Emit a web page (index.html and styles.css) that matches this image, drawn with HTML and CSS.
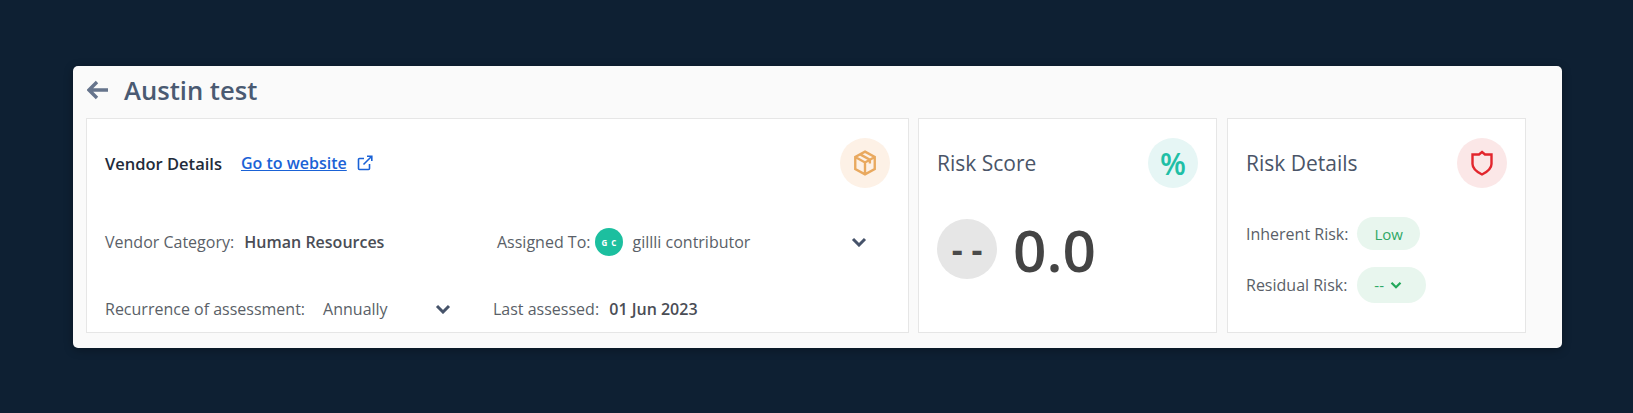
FILE: index.html
```html
<!DOCTYPE html>
<html>
<head>
	<title>Austin test</title>
	<link rel="stylesheet" href="styles.css">
</head>
<body>
	<div class="panel">
		<div class="titleRow">
			<svg class="backArrow" viewBox="0 0 22 20"><path d="M10 2 L2 10 L10 18 M2.5 10 H21"/></svg>
			<h1>Austin test</h1>
		</div>
		<div class="cards">
			<div class="card vendorCard">
				<div class="cardHead">
					<div class="vendorTitle">
						<strong>Vendor Details</strong>
						<a href="#">Go to website</a>
						<svg class="extIcon" viewBox="0 0 16 16"><path d="M12.5 9 V13.5 A1 1 0 0 1 11.5 14.5 H2.5 A1 1 0 0 1 1.5 13.5 V4.5 A1 1 0 0 1 2.5 3.5 H7 M6.5 9.5 L14.5 1.5 M10 1.2 H14.8 V6"/></svg>
					</div>
					<div class="iconCircle orange">
						<svg viewBox="0 0 24 24"><path d="M12 1.5 L21 6.5 V17.5 L12 22.5 L3 17.5 V6.5 Z M3 6.5 L12 11.5 L21 6.5 M12 11.5 V22.5 M7.5 4 L16.5 9 V12.5"/></svg>
					</div>
				</div>
				<div class="vendorRow rowOne">
					<div class="cellLeft">
						<span class="label">Vendor Category:</span>
						<b class="value">Human Resources</b>
					</div>
					<div class="cellAssigned">
						<span class="label">Assigned To:</span>
						<span class="avatar">G C</span>
						<span class="label">gillli contributor</span>
						<svg class="chevron chevronAssigned" viewBox="0 0 16 10"><path d="M2 2 L8 8 L14 2"/></svg>
					</div>
				</div>
				<div class="vendorRow rowTwo">
					<div class="cellRecur">
						<span class="label">Recurrence of assessment:</span>
						<span class="label annually">Annually</span>
						<svg class="chevron" viewBox="0 0 16 10"><path d="M2 2 L8 8 L14 2"/></svg>
					</div>
					<div class="cellLast">
						<span class="label">Last assessed:</span>
						<b class="value">01 Jun 2023</b>
					</div>
				</div>
			</div>
			<div class="card scoreCard">
				<div class="cardHead">
					<div class="cardTitle">Risk Score</div>
					<div class="iconCircle teal">%</div>
				</div>
				<div class="scoreRow">
					<div class="scoreDash">- -</div>
					<div class="scoreNum">0.0</div>
				</div>
			</div>
			<div class="card detailsCard">
				<div class="cardHead">
					<div class="cardTitle">Risk Details</div>
					<div class="iconCircle red">
						<svg viewBox="0 0 24 26"><path d="M12 2 L15 4.5 L21.5 4.5 V14 C21.5 18.5 17 22 12 24.5 C7 22 2.5 18.5 2.5 14 V4.5 L9 4.5 Z"/></svg>
					</div>
				</div>
				<div class="riskRow firstRisk">
					<span class="label">Inherent Risk:</span>
					<span class="pill">Low</span>
				</div>
				<div class="riskRow">
					<span class="label">Residual Risk:</span>
					<span class="pill pillSelect">-- <svg viewBox="0 0 16 10"><path d="M2 2 L8 8 L14 2"/></svg></span>
				</div>
			</div>
		</div>
	</div>
</body>
</html>
```
FILE: styles.css
```css
body {
	margin: 0;
	background: #0e2033;
	font-family: "Open Sans", "Noto Sans", sans-serif;
	color: #4f5560;
	padding: 66px 71px 65px 73px;
	overflow: hidden;
}
.panel {
	background: #fafafa;
	height: 282px;
	border-radius: 5px;
	box-shadow: 0 2px 10px rgba(0, 0, 0, 0.3);
}
.titleRow {
	display: flex;
	align-items: center;
	height: 48px;
	padding-left: 14px;
}
.backArrow {
	width: 22px;
	height: 20px;
	fill: none;
	stroke: #66748c;
	stroke-width: 3.4;
}
h1 {
	margin: 0 0 0 15px;
	font-size: 25.6px;
	font-weight: 600;
	color: #4a5a72;
}
.cards {
	display: flex;
	padding: 4px 0 0 13px;
}
.card {
	box-sizing: border-box;
	height: 215px;
	background: #fff;
	border: 1px solid #e6e6e6;
	padding: 19px 18px;
}
.vendorCard {
	width: 823px;
}
.scoreCard {
	width: 299px;
	margin-left: 9px;
}
.detailsCard {
	width: 299px;
	margin-left: 10px;
}
.cardHead {
	display: flex;
	justify-content: space-between;
	align-items: center;
}
.iconCircle {
	width: 50px;
	height: 50px;
	border-radius: 50%;
	display: flex;
	align-items: center;
	justify-content: center;
}
.iconCircle svg {
	fill: none;
}
.orange {
	background: #fdf1e6;
}
.orange svg {
	width: 26px;
	height: 26px;
	stroke: #e9a95f;
	stroke-width: 2.2;
}
.teal {
	background: #e6f6f5;
	color: #1fbfa6;
	font-size: 30px;
	font-weight: 600;
}
.red {
	background: #fbe7e7;
}
.red svg {
	width: 24px;
	height: 26px;
	stroke: #e2262d;
	stroke-width: 2.4;
}
.vendorTitle {
	display: flex;
	align-items: center;
	font-size: 16px;
}
.vendorTitle strong {
	font-size: 16.5px;
	font-weight: 600;
	color: #222b3a;
}
.vendorTitle a {
	margin-left: 19px;
	color: #1a62d6;
	font-weight: 600;
}
.extIcon {
	width: 16px;
	height: 16px;
	margin-left: 10px;
	fill: none;
	stroke: #1a62d6;
	stroke-width: 1.6;
}
.vendorRow {
	display: flex;
	align-items: center;
	height: 24px;
	font-size: 16px;
}
.rowOne {
	margin-top: 42px;
}
.rowTwo {
	margin-top: 43px;
}
.label {
	color: #5a5f68;
}
.value {
	color: #4a4d55;
	margin-left: 6px;
	font-weight: 600;
}
.cellLeft {
	width: 392px;
}
.cellAssigned {
	display: flex;
	align-items: center;
}
.avatar {
	width: 28px;
	height: 28px;
	margin: 0 9px 0 5px;
	border-radius: 50%;
	background: #1cbf9f;
	color: #fff;
	font-size: 8px;
	font-weight: 700;
	letter-spacing: 1px;
	display: flex;
	align-items: center;
	justify-content: center;
}
.chevron {
	width: 16px;
	height: 10px;
	fill: none;
	stroke: #46536a;
	stroke-width: 3;
}
.chevronAssigned {
	margin-left: 101px;
}
.cellRecur {
	display: flex;
	align-items: center;
	width: 388px;
}
.annually {
	margin-left: 18px;
}
.cellRecur .chevron {
	margin-left: 47px;
}
.cardTitle {
	font-size: 21px;
	color: #4a5568;
}
.scoreRow {
	display: flex;
	align-items: center;
	gap: 16px;
	margin-top: 31px;
}
.scoreDash {
	width: 60px;
	height: 60px;
	border-radius: 50%;
	background: #e6e6e6;
	color: #4a4a4a;
	font-size: 34px;
	font-weight: 700;
	display: flex;
	align-items: center;
	justify-content: center;
}
.scoreNum {
	font-size: 58.5px;
	line-height: 60px;
	font-weight: 600;
	color: #444;
}
.riskRow {
	display: flex;
	align-items: center;
	gap: 9px;
	font-size: 16px;
	margin-top: 17px;
}
.firstRisk {
	margin-top: 29px;
}
.pill {
	background: #e8f6ee;
	color: #2fa866;
	height: 33px;
	padding: 0 17px;
	border-radius: 17px;
	font-size: 15px;
	display: flex;
	align-items: center;
}
.pillSelect {
	height: 36px;
	width: 69px;
	margin-left: 1px;
	box-sizing: border-box;
	border-radius: 18px;
}
.pillSelect svg {
	width: 12px;
	height: 8px;
	margin-left: 6px;
	fill: none;
	stroke: #22a85a;
	stroke-width: 3;
}
```
